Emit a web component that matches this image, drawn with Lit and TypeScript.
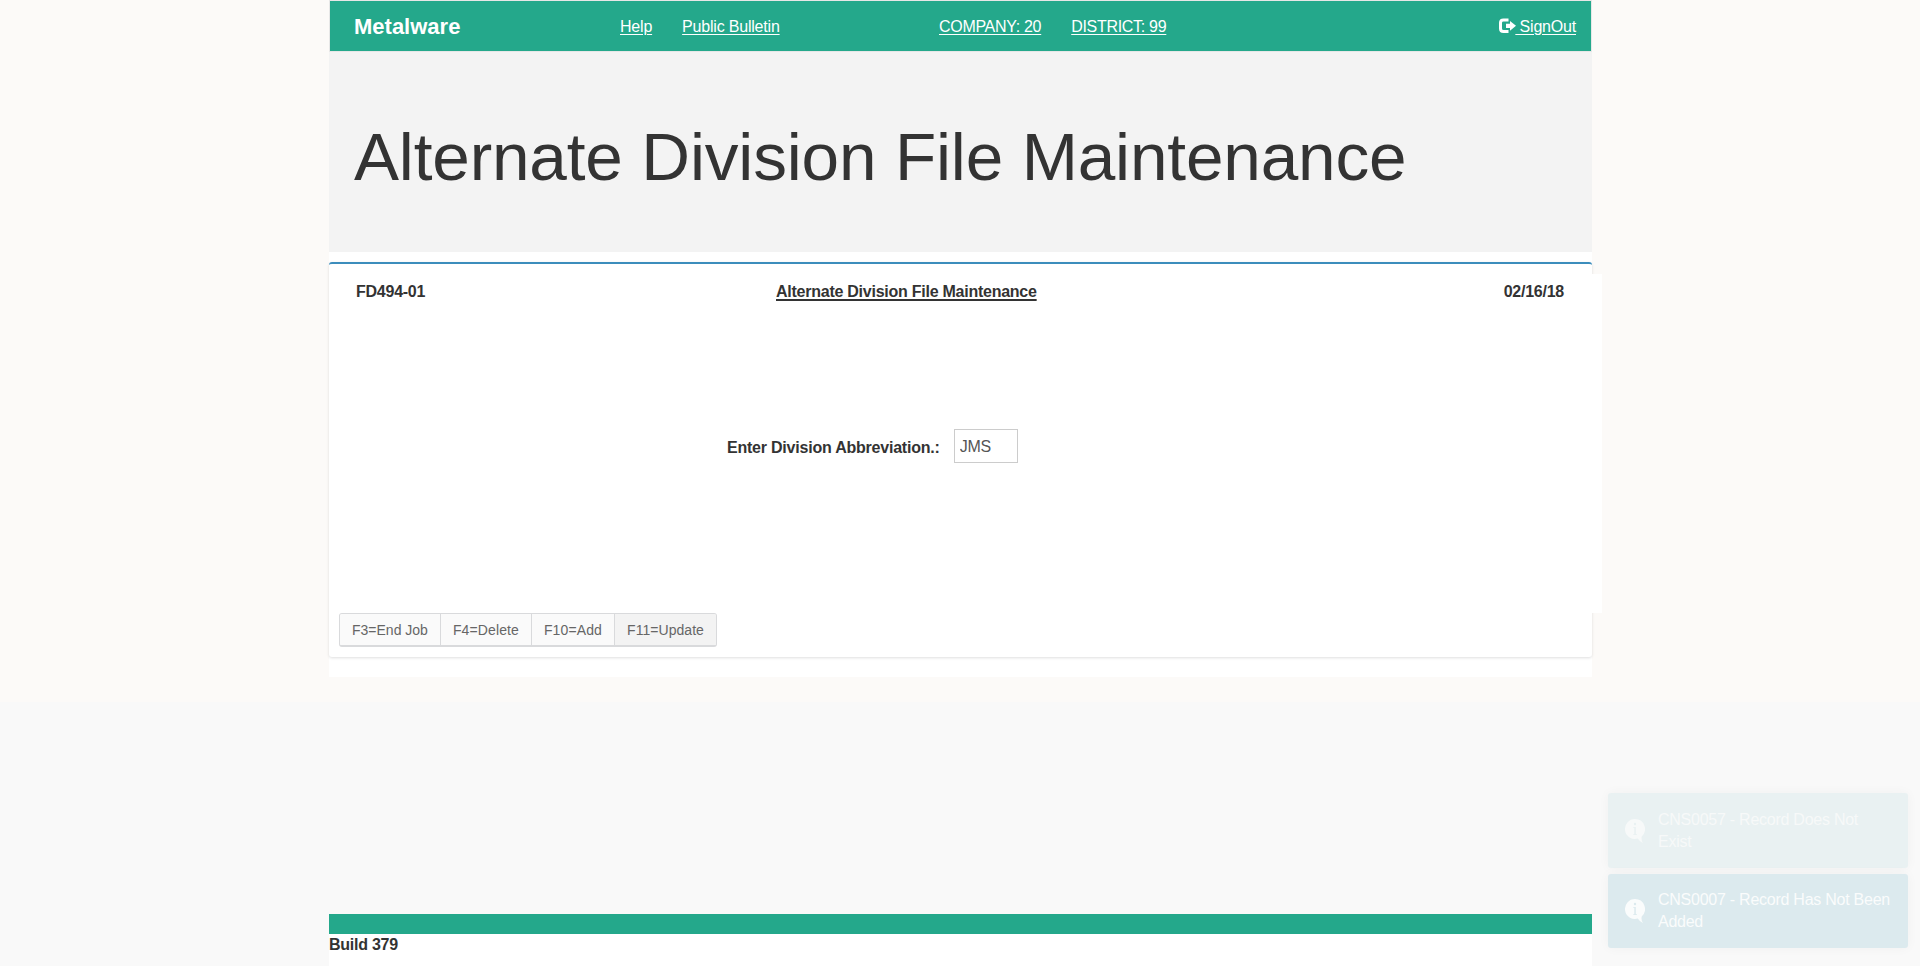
import { LitElement, html, css } from "lit";
import { customElement } from "lit/decorators.js";

@customElement("app-root")
class AppRoot extends LitElement {
  static styles = css`
    :host { display: block; height: 966px; overflow: hidden; position: relative; background: #f9f9f9;
      font: 16px/22px "Liberation Sans", Arial, sans-serif; color: #333; }
    * { box-sizing: border-box; }
    .upper { height: 702px; background: #fcfaf8; padding-left: 329px; }
    .container { width: 1263px; height: 677px; background: #fff; }
    nav { height: 52px; background: #24a88b; border: 1px solid #e7e7e7; display: flex; align-items: center; color: #fff; padding: 2px 15px 0 24px; }
    nav a { color: #fff; text-decoration: underline; white-space: nowrap; letter-spacing: -.2px; text-underline-offset: 2px; }
    .brand { font-size: 22px; font-weight: bold; width: 266px; }
    .links { display: flex; gap: 30px; width: 319px; }
    .session { display: flex; gap: 30px; flex: 1; }
    .session a { letter-spacing: -.3px; }
    .signout { display: flex; align-items: center; }
    .signout svg { width: 17px; height: 16px; display: block; margin: -2px -1px 0 0; }
    .signout a { white-space: pre; }
    .hero { height: 200px; background: #f3f3f3; padding: 67px 25px 0; }
    h1 { margin: 0; font-size: 67.5px; line-height: 76px; font-weight: 400; white-space: nowrap; letter-spacing: -.16px; }
    .box { margin-top: 10px; height: 395px; border-top: 2px solid #3c8dbc; border-radius: 3px; background: #fff;
      box-shadow: 0 1px 3px rgba(0,0,0,.13); padding-top: 10px; }
    .screen { width: 1273px; height: 339px; background: #fff; padding: 7px 38px 0 27px; font-weight: bold; letter-spacing: -.25px; }
    .titles { display: flex; height: 22px; }
    .code { width: 420px; }
    .title { flex: 1; text-decoration: underline; text-decoration-thickness: 2px; text-underline-offset: 2px; }
    .entry { display: flex; align-items: center; margin: 126px 0 0 371px; gap: 14px; }
    .entry label { padding-top: 4px; letter-spacing: -.22px; }
    input { width: 64px; height: 34px; border: 1px solid #ccc; padding: 1px 5px 0; font: 16px "Liberation Sans", Arial, sans-serif; letter-spacing: -.2px; color: #555; background: #fff; outline: 0; }
    .keys { display: flex; width: 378px; height: 34px; margin-left: 10px; border: 1px solid #d9dadc; border-bottom-width: 2px; border-radius: 3px; overflow: hidden; }
    .keys button { margin: 0; border: 0; border-left: 1px solid #d9dadc; padding: 0 12px; font: 14px "Liberation Sans", Arial, sans-serif; color: #666; background: #fafafa; white-space: nowrap; letter-spacing: .12px; }
    .keys button:first-child { border-left: 0; letter-spacing: 0; }
    .keys button:last-child { flex: 1; background: #f3f3f3; letter-spacing: .05px; }
    footer { margin: 212px 0 0 329px; width: 1263px; height: 52px; background: #fff; border-top: 20px solid #24a88b; font-weight: bold; line-height: 22px; letter-spacing: -.25px; }
    .toasts { position: absolute; left: 1608px; top: 793px; width: 300px; display: flex; flex-direction: column; gap: 6px; }
    .toast { height: 75px; border-radius: 3px; background: #e9f1f2; color: #f7f9f9; box-shadow: 0 0 12px rgba(0,0,0,.04); padding: 16px 15px 0 17px; display: flex; gap: 13px; letter-spacing: -.25px; }
    .toast.recent { height: 74px; background: #dceaee; color: #fafcfc; padding-top: 15px; }
    .toast svg { flex: none; width: 20px; height: 24px; margin-top: 10px; }
    .ink { fill: #e9f1f2; }
    .recent .ink { fill: #dceaee; }
  `;
  toast(text: string, cls: string) {
    return html`<div class="toast ${cls}">
      <svg viewBox="0 0 20 24"><path fill="currentColor" d="M10 0a10 10 0 1 0 2.8 19.6q2 3.4 5.2 4.4-2-2.6-1.3-6.6A10 10 0 0 0 10 0z"/><circle class="ink" cx="10" cy="5" r="1.2"/><path class="ink" d="M8.2 8h2.6v7.2h1.2v.8H8.2v-.8h1.1V8.8H8.2z"/></svg>
      <div>${text}</div></div>`;
  }
  render() {
    return html`
      <div class="upper"><div class="container">
        <nav>
          <div class="brand">Metalware</div>
          <div class="links"><a>Help</a><a>Public Bulletin</a></div>
          <div class="session"><a>COMPANY: 20</a><a>DISTRICT: 99</a></div>
          <div class="signout"><svg viewBox="0 0 17 16"><path fill="none" stroke="#fff" stroke-width="3" d="M9.5 2H4.5Q1.5 2 1.5 4.8V10.5Q1.5 13.5 4.5 13.5H9.5"/><path fill="#fff" d="M7 5.7h4V2.9L17 7.8l-6 4.9V9.9H7z"/></svg><a> SignOut</a></div>
        </nav>
        <div class="hero"><h1>Alternate Division File Maintenance</h1></div>
        <div class="box">
          <div class="screen">
            <div class="titles"><span class="code">FD494-01</span><span class="title">Alternate Division File Maintenance</span><span>02/16/18</span></div>
            <div class="entry"><label>Enter Division Abbreviation.:</label><input value="JMS"></div>
          </div>
          <div class="keys"><button>F3=End Job</button><button>F4=Delete</button><button>F10=Add</button><button>F11=Update</button></div>
        </div>
      </div></div>
      <footer>Build 379</footer>
      <div class="toasts">${this.toast("CNS0057 - Record Does Not Exist", "")}${this.toast("CNS0007 - Record Has Not Been Added", "recent")}</div>`;
  }
}
